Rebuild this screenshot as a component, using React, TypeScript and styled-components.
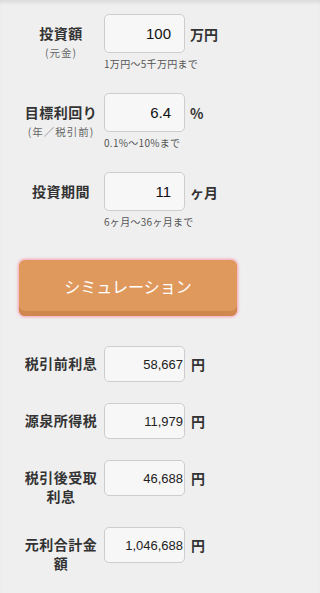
import React from "react";
import styled, { createGlobalStyle } from "styled-components";

const GlobalStyle = createGlobalStyle`
  html, body {
    margin: 0;
    padding: 0;
    background: #efefef;
  }
  body {
    font-family: "Liberation Sans", Arial, "Noto Sans CJK JP", sans-serif;
    color: #333;
  }
`;

type InputRow = {
  label: string;
  sub?: string;
  value: string;
  unit: string;
  hint: string;
};

type ResultRow = {
  label: string;
  value: string;
};

const inputs: InputRow[] = [
  { label: "投資額", sub: "(元金)", value: "100", unit: "万円", hint: "1万円〜5千万円まで" },
  { label: "目標利回り", sub: "(年／税引前)", value: "6.4", unit: "%", hint: "0.1%〜10%まで" },
  { label: "投資期間", value: "11", unit: "ヶ月", hint: "6ヶ月〜36ヶ月まで" },
];

const results: ResultRow[] = [
  { label: "税引前利息", value: "58,667" },
  { label: "源泉所得税", value: "11,979" },
  { label: "税引後受取利息", value: "46,688" },
  { label: "元利合計金額", value: "1,046,688" },
];

const App = () => {
  return (
    <>
      <GlobalStyle />
      <Page>
        {/* 入力欄 */}
        <Section>
          {inputs.map((row) => (
            <Row key={row.label} $gap={22}>
              <LabelCol $pad={10}>
                <Label>{row.label}</Label>
                {row.sub && <SubLabel>{row.sub}</SubLabel>}
              </LabelCol>
              <FieldCol>
                <FieldLine>
                  <ValueBox $h={39}>
                    <InputValue>{row.value}</InputValue>
                  </ValueBox>
                  <Unit>{row.unit}</Unit>
                </FieldLine>
                <Hint>{row.hint}</Hint>
              </FieldCol>
            </Row>
          ))}
        </Section>

        <SimButton type="button">シミュレーション</SimButton>

        {/* 結果 */}
        <Section $top={30}>
          {results.map((row) => (
            <Row key={row.label} $gap={21}>
              <LabelCol $pad={8}>
                <Label>{row.label}</Label>
              </LabelCol>
              <FieldLine>
                <ValueBox $h={36} $pad={1}>
                  <ResultValue>{row.value}</ResultValue>
                </ValueBox>
                <Unit $ml={6}>円</Unit>
              </FieldLine>
            </Row>
          ))}
        </Section>
      </Page>
    </>
  );
};

const Page = styled.div`
  height: 593px;
  overflow: hidden;
  box-sizing: border-box;
  padding: 14px 0 0;
  box-shadow: inset 0 4px 4px -2px rgba(0, 0, 0, 0.1);
`;

const Section = styled.div<{ $top?: number }>`
  display: flex;
  flex-direction: column;
  margin-top: ${(p) => p.$top ?? 0}px;
`;

const Row = styled.div<{ $gap: number }>`
  display: flex;
  align-items: flex-start;
  margin-bottom: ${(p) => p.$gap}px;
`;

const LabelCol = styled.div<{ $pad: number }>`
  width: 74px;
  margin-left: 24px;
  margin-right: 6px;
  padding-top: ${(p) => p.$pad}px;
  display: flex;
  flex-direction: column;
  align-items: center;
  text-align: center;
  font-family: "Noto Sans CJK JP", sans-serif;
`;

const Label = styled.div`
  font-size: 14px;
  font-weight: 700;
  line-height: 19px;
  color: #333;
  letter-spacing: 0.5px;
`;

const SubLabel = styled.div`
  font-size: 10.5px;
  line-height: 14px;
  margin-top: 3px;
  color: #666;
  letter-spacing: 1px;
  white-space: nowrap;
`;

const FieldCol = styled.div`
  display: flex;
  flex-direction: column;
`;

const FieldLine = styled.div`
  display: flex;
  align-items: center;
`;

const ValueBox = styled.div<{ $h: number; $pad?: number }>`
  width: 81px;
  height: ${(p) => p.$h}px;
  box-sizing: border-box;
  border: 1px solid #cdcdcd;
  border-radius: 5px;
  background: #f7f7f7;
  display: flex;
  align-items: center;
  justify-content: flex-end;
  padding-right: ${(p) => p.$pad ?? 13}px;
`;

const InputValue = styled.span`
  font-size: 15px;
  color: #111;
`;

const ResultValue = styled.span`
  font-size: 13px;
  color: #222;
`;

const Unit = styled.span<{ $ml?: number }>`
  margin-left: ${(p) => p.$ml ?? 5}px;
  font-family: "Noto Sans CJK JP", sans-serif;
  font-size: 14px;
  font-weight: 700;
  color: #333;
`;

const Hint = styled.div`
  margin-top: 4px;
  font-family: "Noto Sans CJK JP", sans-serif;
  font-size: 10px;
  line-height: 14px;
  color: #555;
  letter-spacing: 0.3px;
`;

const SimButton = styled.button`
  display: block;
  width: 218px;
  height: 56px;
  margin: 9px 0 0 19px;
  border: none;
  border-radius: 6px;
  background: #e0995d;
  box-shadow: inset 0 -5px 0 #cf874f, 0 0 3px 1px #f7a0b4;
  color: #fff;
  font-family: "Noto Sans CJK JP", sans-serif;
  font-size: 16px;
  padding: 0 0 5px;
  cursor: pointer;
`;

export default App;
